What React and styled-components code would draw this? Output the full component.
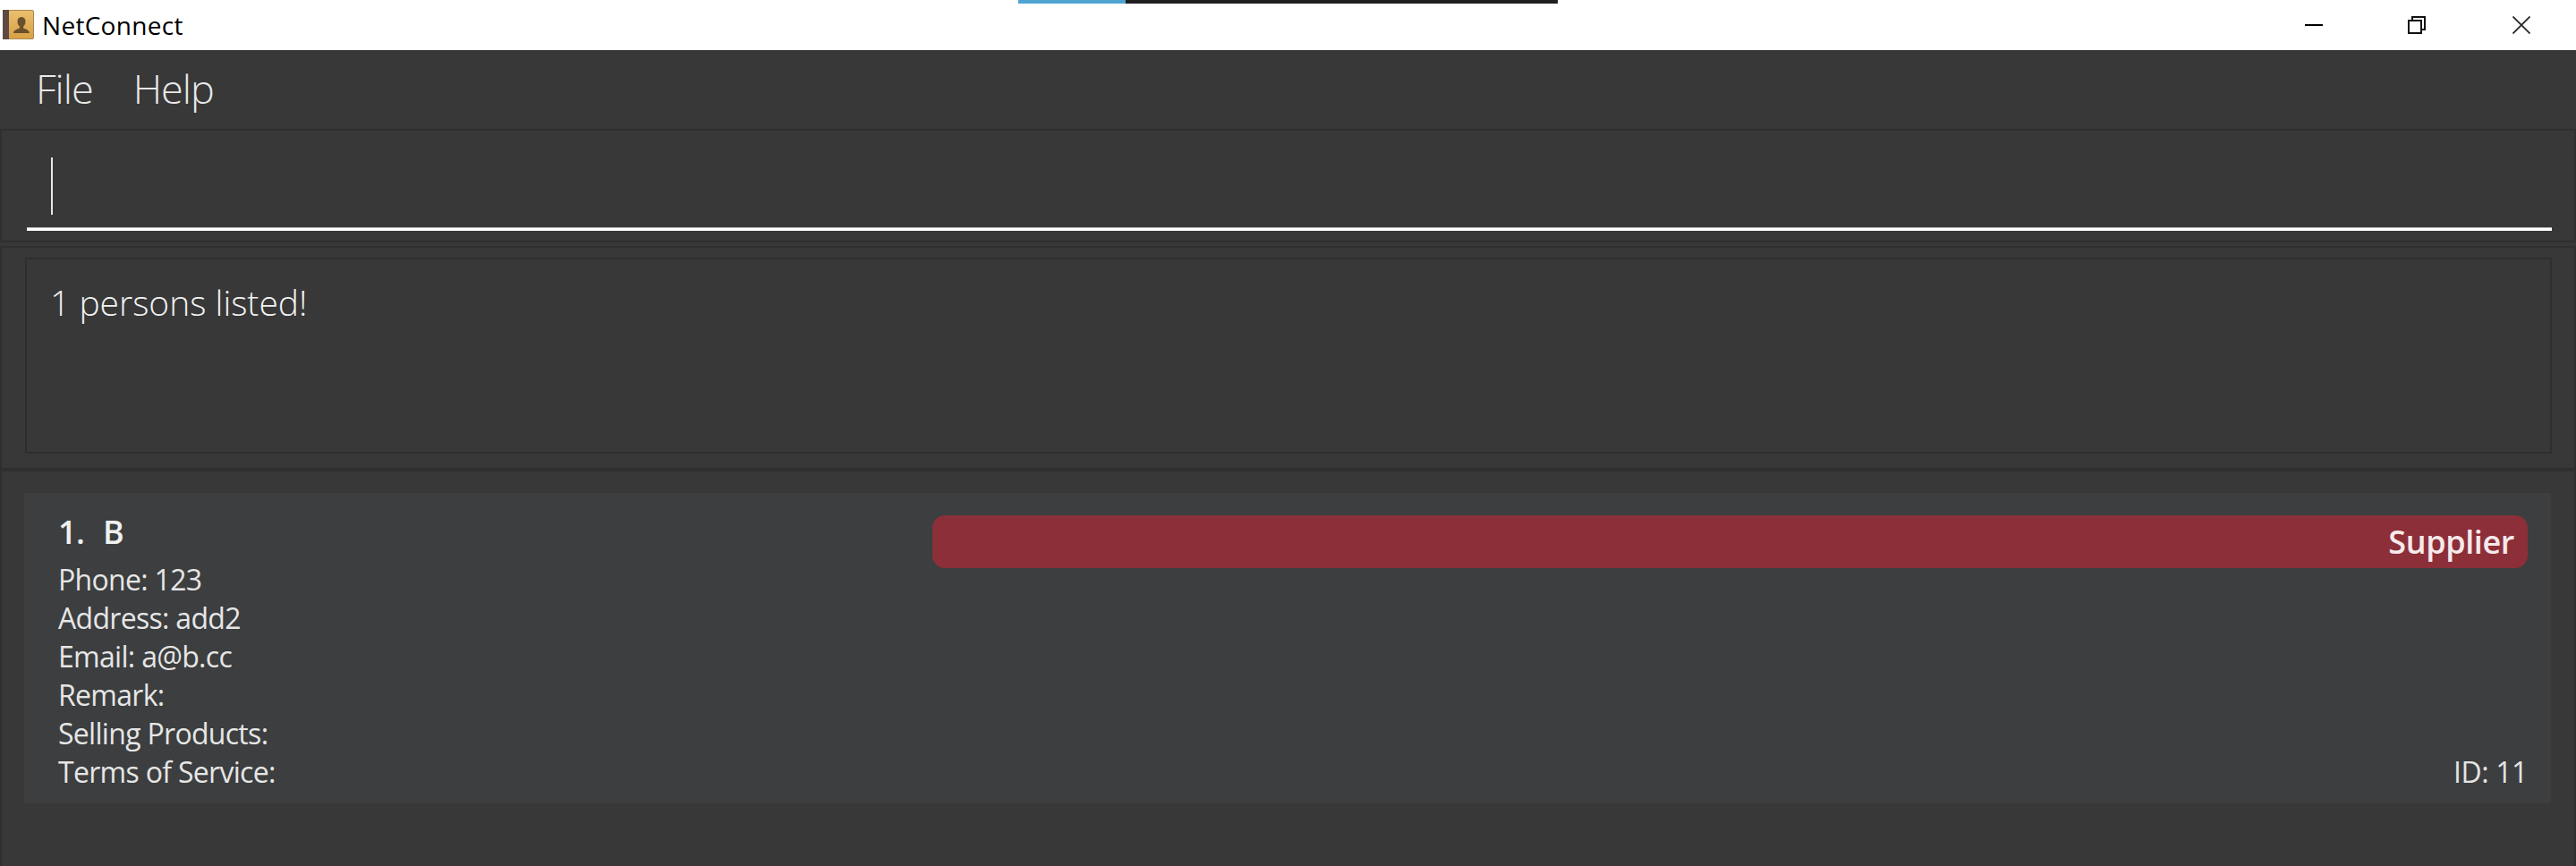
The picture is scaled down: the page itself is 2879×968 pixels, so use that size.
import React from 'react';
import styled, { createGlobalStyle } from 'styled-components';

const GlobalStyle = createGlobalStyle`
  html, body {
    margin: 0;
    padding: 0;
    background: #383838;
  }
  * {
    box-sizing: border-box;
  }
`;

const Window = styled.div`
  display: flex;
  flex-direction: column;
  width: 2879px;
  height: 968px;
  overflow: hidden;
  font-family: "Open Sans", "Noto Sans", sans-serif;
  background: #383838;
`;

const TitleBar = styled.div`
  position: relative;
  display: flex;
  align-items: center;
  justify-content: space-between;
  flex: 0 0 56px;
  background: #fff;
`;

const TitleLeft = styled.div`
  display: flex;
  align-items: center;
  gap: 8px;
  padding-left: 3px;
`;

const TitleText = styled.span`
  font-size: 28px;
  line-height: 56px;
  color: #000;
  letter-spacing: 0.3px;
`;

const AccentStrip = styled.div`
  position: absolute;
  top: 0;
  left: 1138px;
  display: flex;
  height: 4px;
`;

const AccentPart = styled.div`
  width: ${(p) => p.$width}px;
  background: ${(p) => p.$color};
`;

const WindowControls = styled.div`
  display: flex;
  align-items: center;
  gap: 95px;
  padding-right: 51px;
`;

const ControlIcon = styled.svg`
  width: 20px;
  height: 20px;
  margin-left: ${(p) => p.$nudge || 0}px;
`;

const MenuBar = styled.div`
  display: flex;
  flex: 0 0 88px;
  align-items: center;
  gap: 45px;
  padding: 0 0 2px 40px;
`;

const MenuItem = styled.span`
  font-size: 45px;
  font-weight: 300;
  line-height: 60px;
  color: #e8e8e8;
  letter-spacing: -1px;
`;

const Pane = styled.section`
  display: flex;
  flex-direction: column;
  flex: ${(p) => p.$grow ? '1 1 auto' : `0 0 ${p.$height}px`};
  margin-bottom: ${(p) => p.$gap || 0}px;
  padding: ${(p) => p.$padding};
  border: 2px solid #2f2f2f;
  border-bottom-width: ${(p) => p.$grow ? 0 : 2}px;
  background: #383838;
`;

const CommandField = styled.div`
  display: flex;
  align-items: flex-start;
  height: 112px;
  padding: 30px 0 0 27px;
  border-bottom: 3px solid #fff;
  box-shadow: inset 0 -1px 0 #bdbdbd;
`;

const Caret = styled.div`
  width: 2px;
  height: 64px;
  background: #e6e6e6;
`;

const ResultBox = styled.div`
  height: 219px;
  padding: 22px 0 0 26px;
  border: 2px solid #2e2e2e;
  font-size: 39px;
  font-weight: 300;
  line-height: 52px;
  color: #f2f2f2;
  letter-spacing: 0;
`;

const PersonCard = styled.article`
  display: flex;
  justify-content: space-between;
  height: 347px;
  padding: 18px 26px 0 38px;
  background: #3c3e3f;
`;

const PersonInfo = styled.div`
  display: flex;
  flex-direction: column;
`;

const PersonName = styled.div`
  display: flex;
  gap: 21px;
  height: 57px;
  font-size: 36px;
  font-weight: 600;
  line-height: 52px;
  color: #f0f0f0;
  letter-spacing: -0.7px;
`;

const InfoLine = styled.div`
  height: 43px;
  font-size: 32px;
  font-weight: 400;
  line-height: 43px;
  color: #e6e6e6;
  letter-spacing: -0.7px;
`;

const CardRight = styled.div`
  display: flex;
  flex-direction: column;
  justify-content: space-between;
  width: 1783px;
  padding: 7px 0 14px;
`;

const TypeBadge = styled.div`
  height: 59px;
  padding-right: 15px;
  border-radius: 14px;
  background: #8c2f39;
  font-size: 36px;
  font-weight: 600;
  line-height: 60px;
  text-align: right;
  color: #f6e9ea;
  letter-spacing: -0.4px;
`;

const PersonId = styled.div`
  padding-right: 0;
  font-size: 32px;
  font-weight: 400;
  line-height: 43px;
  text-align: right;
  color: #e4e4e4;
  letter-spacing: -0.4px;
`;

const AppIcon = () => (
  <svg width="36" height="34" viewBox="0 0 36 34">
    <defs>
      <linearGradient id="cover" x1="0" y1="0" x2="0" y2="1">
        <stop offset="0" stopColor="#e9c06f" />
        <stop offset="1" stopColor="#d99f45" />
      </linearGradient>
    </defs>
    <rect x="0.5" y="0.500" width="34" height="32" rx="1.500" fill="url(#cover)" stroke="#a9894f" strokeWidth="1" />
    <rect x="0" y="0" width="7" height="33" fill="#5e4a42" />
    <path d="M21 8c-3 0-4.500 2.200-4.500 5s1.200 4.600 2.400 5.600v1.800c-2.800 1-6.400 2-6.900 5.600h18c-.5-3.600-4.100-4.600-6.900-5.600v-1.800c1.200-1 2.400-2.800 2.400-5.600S24 8 21 8z" fill="#69502c" />
  </svg>
);

const MinimizeIcon = () => (
  <ControlIcon viewBox="0 0 20 20">
    <rect x="0" y="9" width="20" height="2" fill="#000" />
  </ControlIcon>
);

const RestoreIcon = () => (
  <ControlIcon viewBox="0 0 20 20" fill="none" stroke="#111" strokeWidth="2">
    <rect x="1" y="5" width="14" height="14" />
    <path d="M5 4V1h14v14h-3" />
  </ControlIcon>
);

const CloseIcon = () => (
  <ControlIcon $nudge={2} viewBox="0 0 20 20" fill="none" stroke="#222" strokeWidth="1.700">
    <path d="M0.500 0.500l19 19M19.500 0.500l-19 19" />
  </ControlIcon>
);

const details = [
  'Phone: 123',
  'Address: add2',
  'Email: a@b.cc',
  'Remark:',
  'Selling Products:',
  'Terms of Service:',
];

export default function App() {
  return (
    <Window>
      <GlobalStyle />
      <TitleBar>
        <AccentStrip>
          <AccentPart $width={120} $color="#4fa3d1" />
          <AccentPart $width={483} $color="#1f1f1f" />
        </AccentStrip>
        <TitleLeft>
          <AppIcon />
          <TitleText>NetConnect</TitleText>
        </TitleLeft>
        <WindowControls>
          <MinimizeIcon />
          <RestoreIcon />
          <CloseIcon />
        </WindowControls>
      </TitleBar>
      <MenuBar>
        <MenuItem>File</MenuItem>
        <MenuItem>Help</MenuItem>
      </MenuBar>
      <Pane $height={127} $gap={4} $padding="0 25px 0 28px">
        <CommandField>
          <Caret />
        </CommandField>
      </Pane>
      <Pane $height={250} $padding="11px 25px 0 26px">
        <ResultBox>1 persons listed!</ResultBox>
      </Pane>
      <Pane $grow $padding="24px 26px 0 25px">
        <PersonCard>
          <PersonInfo>
            <PersonName>
              <span>1.</span>
              <span>B</span>
            </PersonName>
            {details.map((line) => (
              <InfoLine key={line}>{line}</InfoLine>
            ))}
          </PersonInfo>
          <CardRight>
            <TypeBadge>Supplier</TypeBadge>
            <PersonId>ID: 11</PersonId>
          </CardRight>
        </PersonCard>
      </Pane>
    </Window>
  );
}
